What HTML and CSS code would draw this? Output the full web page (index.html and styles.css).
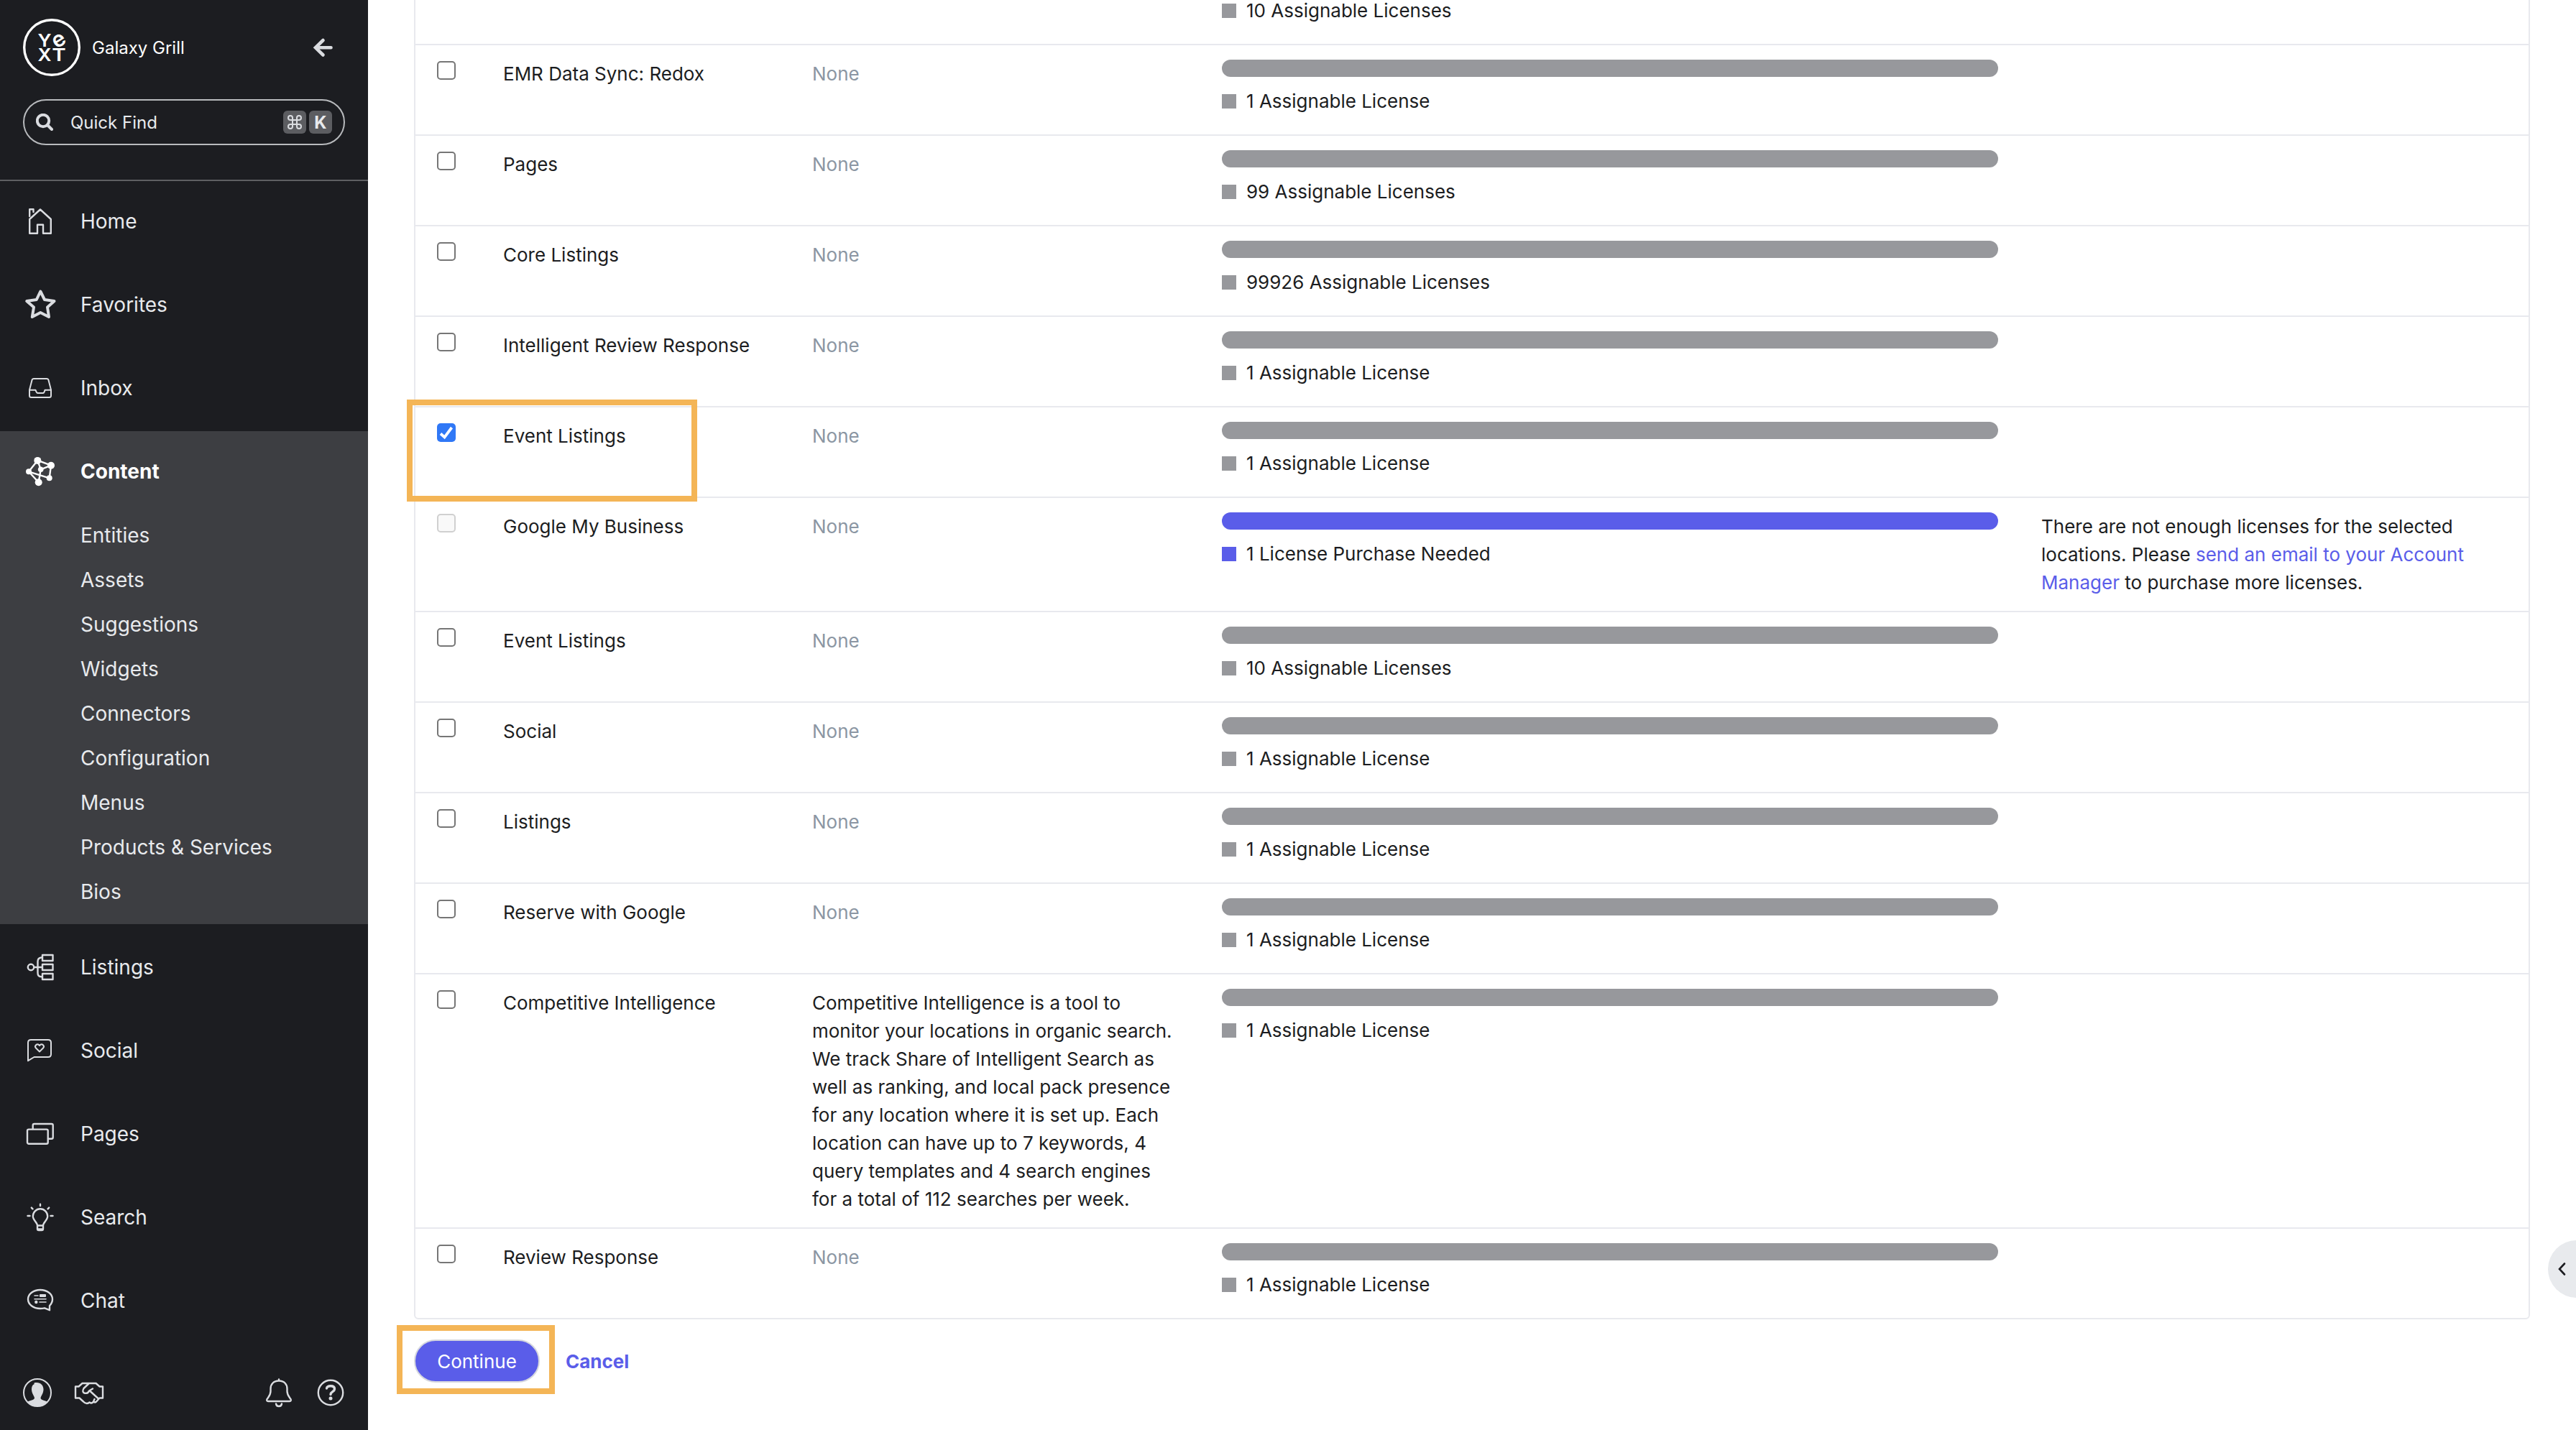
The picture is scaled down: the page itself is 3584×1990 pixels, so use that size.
FILE: index.html
```html
<!DOCTYPE html>
<html lang="en">
<head>
  <meta charset="UTF-8">
  <meta name="viewport" content="width=device-width, initial-scale=1.0">
  <title>Galaxy Grill - Add Services</title>
  <link rel="stylesheet" href="styles.css">
</head>
<body>
  <div class="app">
    <nav class="sidebar">
      <div class="account">
        <svg class="logo" viewBox="0 0 80 80">
          <circle cx="40" cy="40" r="38.3" />
          <text x="20.5" y="38.800" textLength="19" lengthAdjust="spacingAndGlyphs">Y</text>
          <text class="logo-e" x="40.700" y="38.800" textLength="18" lengthAdjust="spacingAndGlyphs" transform="rotate(-32 49.700 30)">e</text>
          <text x="20.5" y="58.800" textLength="19" lengthAdjust="spacingAndGlyphs">X</text>
          <text x="40.200" y="58.800" textLength="19.500" lengthAdjust="spacingAndGlyphs">T</text>
        </svg>
        <span class="account-name">Galaxy Grill</span>
        <svg class="collapse" viewBox="0 0 28 28"><path d="M14.500 4L4 14.300L14.500 24.500M4.500 14.300H25.500" /></svg>
      </div>

      <div class="quick-find">
        <svg class="find-icon" viewBox="0 0 24 24"><circle cx="10" cy="10" r="8.200" /><path d="M16 16L22 22" /></svg>
        <span class="find-label">Quick Find</span>
        <span class="key">
          <svg viewBox="0 0 20 20"><path d="M7 7V4A3 3 0 1 0 4 7H16A3 3 0 1 0 13 4V16A3 3 0 1 0 16 13H4A3 3 0 1 0 7 16Z" /></svg>
        </span>
        <span class="key">K</span>
      </div>

      <div class="menu">
        <a class="menu-item">
          <svg class="icon" viewBox="0 0 40 40"><path d="M5.200 36.800V17L20 3.500L34.800 17V36.800H24V24.800H16V36.800ZM5.200 13V3.200H10.500V7" /></svg>
          <span>Home</span>
        </a>
        <a class="menu-item">
          <svg class="icon star" viewBox="0 0 40 40"><path d="M20.300 1.500L26 13L39.500 15L30 23.500L32 37L20.300 31L8.800 37L11 23.500L1.200 15L14.800 13Z" /></svg>
          <span>Favorites</span>
        </a>
        <a class="menu-item">
          <svg class="icon thin" viewBox="0 0 40 40"><path d="M5 22.500L8.500 9Q9 7 11 7H29Q31 7 31.500 9L35 22.500V30.500Q35 33 32.500 33H7.500Q5 33 5 30.500ZM5 22.700H13.500Q14.800 27 16.500 27H24Q25.500 27 26.500 22.700H35" /></svg>
          <span>Inbox</span>
        </a>

        <div class="menu-group">
          <a class="menu-item active">
            <svg class="icon graph" viewBox="0 0 40 40">
              <path d="M16.300 4.700L35 11.700L32.700 29.300L4 20.300ZM16.300 4.700L20.700 17.300L35 11.700M20.700 17.300L17.700 35.300L4 20.300" />
              <circle cx="16.300" cy="4.900" r="5" />
              <circle cx="35" cy="11.700" r="5" />
              <circle cx="4" cy="20.300" r="4" />
              <circle cx="20.700" cy="17.300" r="3.800" />
              <circle cx="32.700" cy="29.300" r="4" />
              <circle cx="17.700" cy="35.200" r="5" />
            </svg>
            <span>Content</span>
          </a>
          <a class="sub-item">Entities</a>
          <a class="sub-item">Assets</a>
          <a class="sub-item">Suggestions</a>
          <a class="sub-item">Widgets</a>
          <a class="sub-item">Connectors</a>
          <a class="sub-item">Configuration</a>
          <a class="sub-item">Menus</a>
          <a class="sub-item">Products &amp; Services</a>
          <a class="sub-item">Bios</a>
        </div>

        <a class="menu-item">
          <svg class="icon" viewBox="0 0 40 40">
            <circle cx="7" cy="20" r="4.200" />
            <rect x="23" y="3" width="14.500" height="8" />
            <rect x="23" y="16" width="14.500" height="8" />
            <rect x="23" y="29" width="14.500" height="8" />
            <path d="M11.200 20H23M23 6.500H21.500Q16.500 7 16.500 12V28Q16.500 33 21.500 33.200H23" />
          </svg>
          <span>Listings</span>
        </a>
        <a class="menu-item">
          <svg class="icon thin" viewBox="0 0 40 40"><path d="M3 34.200V9Q3 5 7 5H31Q35 5 35 9V25Q35 29 31 29H11.500ZM19 21.500L14 16.500A3 3 0 0 1 18.300 12.300L19 13L19.700 12.300A3 3 0 0 1 24 16.500Z" /></svg>
          <span>Social</span>
        </a>
        <a class="menu-item">
          <svg class="icon" viewBox="0 0 40 40"><path d="M9.700 13V8Q9.700 6 11.700 6H35.700Q37.700 6 37.700 8V24.700Q37.700 26.700 35.700 26.700H31" /><rect x="2" y="13.600" width="28.700" height="20.200" rx="2" /></svg>
          <span>Pages</span>
        </a>
        <a class="menu-item">
          <svg class="icon" viewBox="0 0 40 40"><path d="M16 31.500C16 27.500 9.800 24 9.800 18.500A10.200 10.200 0 0 1 30.200 18.500C30.200 24 24 27.500 24 31.500ZM16 31.500V36Q16 38 18 38H22Q24 38 24 36V31.500M17 36.500H23M20 1.800V4M2.500 18H5.500M34.500 18H37.500M7.800 6.600L9.500 8.300M32.200 6.600L30.500 8.300" /></svg>
          <span>Search</span>
        </a>
        <a class="menu-item">
          <svg class="icon chat" viewBox="0 0 40 40">
            <path d="M33 33.200V27C35.500 24.500 37 21.500 37 18C37 10.800 29.500 5 20 5S3 10.800 3 18S10.500 31 20 31Q23 31 26 30.300Z" />
            <path class="chat-lines" d="M12 13H17M12 17.700H28M19 22H28" />
            <rect class="fill" x="19" y="11" width="9" height="4" rx="1" />
            <circle class="fill" cx="14.300" cy="22" r="2.200" />
          </svg>
          <span>Chat</span>
        </a>
      </div>

      <div class="sidebar-footer">
        <svg class="icon thin" viewBox="0 0 40 40"><circle cx="20" cy="20" r="19" /><path class="fill" d="M6.500 32.500C11 30.500 16 30 16 27.500C16 25.500 12 21 12 15.500C12 11 14 8.500 15.500 8.500V6.500C23 4.500 28.500 9 28.500 15.500C28.500 21 24.500 25.500 24.500 27.500C24.500 30 29 30.500 33.500 32.500C26 41 14 41 6.500 32.500Z" /></svg>
        <svg class="icon" viewBox="0 0 40 40"><path d="M1 11.500H5.500L10.500 7H29.500L34.500 11.500H39V27.500H34.500L30.500 32Q28.500 34.500 26 32.500Q23.500 36 20.500 33.500Q16 37 12 32.500L6.500 27.500H1ZM19.500 7.500L12.500 14Q9.500 19.500 14 20.800Q18.500 21.500 20 17.500L25 14.500M21.500 18L33 28.500M26 32.500L27.500 29" /></svg>
        <span class="spacer"></span>
        <svg class="icon" viewBox="0 0 40 40"><path d="M20 1.500V3.500M20 3.500C12.500 3.500 8.500 8.500 8.500 14.500V18C8.500 24 5 26.500 3.500 29Q2.500 32 5 32H35Q37.500 32 36.500 29C35 26.500 31.500 24 31.500 18V14.500C31.500 8.500 27.500 3.500 20 3.500ZM16 35.500Q16.500 39 20 39Q23.500 39 24 35.500" /></svg>
        <svg class="icon" viewBox="0 0 40 40"><circle cx="20" cy="20" r="17.200" /><path class="question" d="M14.500 14C15 11.500 17 10.800 20 10.800C23.500 10.800 25.500 12.300 25.500 15C25.500 18.500 20 18.800 20 22.500" /><circle class="fill" cx="20" cy="28" r="2.500" /></svg>
      </div>
    </nav>

    <main class="main">
      <div class="services">
        <div class="row">
          <div class="cell"></div>
          <div class="cell"></div>
          <div class="cell"></div>
          <div class="cell"><div class="bar"></div><div class="legend">10 Assignable Licenses</div></div>
          <div class="cell"></div>
        </div>
        <div class="row">
          <div class="cell"><span class="checkbox"></span></div>
          <div class="cell">EMR Data Sync: Redox</div>
          <div class="cell none">None</div>
          <div class="cell"><div class="bar"></div><div class="legend">1 Assignable License</div></div>
          <div class="cell"></div>
        </div>
        <div class="row">
          <div class="cell"><span class="checkbox"></span></div>
          <div class="cell">Pages</div>
          <div class="cell none">None</div>
          <div class="cell"><div class="bar"></div><div class="legend">99 Assignable Licenses</div></div>
          <div class="cell"></div>
        </div>
        <div class="row">
          <div class="cell"><span class="checkbox"></span></div>
          <div class="cell">Core Listings</div>
          <div class="cell none">None</div>
          <div class="cell"><div class="bar"></div><div class="legend">99926 Assignable Licenses</div></div>
          <div class="cell"></div>
        </div>
        <div class="row">
          <div class="cell"><span class="checkbox"></span></div>
          <div class="cell">Intelligent Review Response</div>
          <div class="cell none">None</div>
          <div class="cell"><div class="bar"></div><div class="legend">1 Assignable License</div></div>
          <div class="cell"></div>
        </div>
        <div class="row">
          <div class="highlight highlight-row"></div>
          <div class="cell"><span class="checkbox checked"><svg viewBox="0 0 26 26"><path d="M5 14.500L10.500 19.500L20.500 6" /></svg></span></div>
          <div class="cell">Event Listings</div>
          <div class="cell none">None</div>
          <div class="cell"><div class="bar"></div><div class="legend">1 Assignable License</div></div>
          <div class="cell"></div>
        </div>
        <div class="row needed">
          <div class="cell"><span class="checkbox disabled"></span></div>
          <div class="cell">Google My Business</div>
          <div class="cell none">None</div>
          <div class="cell"><div class="bar"></div><div class="legend">1 License Purchase Needed</div></div>
          <div class="cell">There are not enough licenses for the selected locations. Please <a class="link">send an email to your Account Manager</a> to purchase more licenses.</div>
        </div>
        <div class="row">
          <div class="cell"><span class="checkbox"></span></div>
          <div class="cell">Event Listings</div>
          <div class="cell none">None</div>
          <div class="cell"><div class="bar"></div><div class="legend">10 Assignable Licenses</div></div>
          <div class="cell"></div>
        </div>
        <div class="row">
          <div class="cell"><span class="checkbox"></span></div>
          <div class="cell">Social</div>
          <div class="cell none">None</div>
          <div class="cell"><div class="bar"></div><div class="legend">1 Assignable License</div></div>
          <div class="cell"></div>
        </div>
        <div class="row">
          <div class="cell"><span class="checkbox"></span></div>
          <div class="cell">Listings</div>
          <div class="cell none">None</div>
          <div class="cell"><div class="bar"></div><div class="legend">1 Assignable License</div></div>
          <div class="cell"></div>
        </div>
        <div class="row">
          <div class="cell"><span class="checkbox"></span></div>
          <div class="cell">Reserve with Google</div>
          <div class="cell none">None</div>
          <div class="cell"><div class="bar"></div><div class="legend">1 Assignable License</div></div>
          <div class="cell"></div>
        </div>
        <div class="row">
          <div class="cell"><span class="checkbox"></span></div>
          <div class="cell">Competitive Intelligence</div>
          <div class="cell">Competitive Intelligence is a tool to monitor your locations in organic search. We track Share of Intelligent Search as well as ranking, and local pack presence for any location where it is set up. Each location can have up to 7 keywords, 4 query templates and 4 search engines for a total of 112 searches per week.</div>
          <div class="cell"><div class="bar"></div><div class="legend">1 Assignable License</div></div>
          <div class="cell"></div>
        </div>
        <div class="row">
          <div class="cell"><span class="checkbox"></span></div>
          <div class="cell">Review Response</div>
          <div class="cell none">None</div>
          <div class="cell"><div class="bar"></div><div class="legend">1 Assignable License</div></div>
          <div class="cell"></div>
        </div>
      </div>

      <div class="actions">
        <div class="highlight highlight-button"></div>
        <button class="btn-continue">Continue</button>
        <a class="btn-cancel">Cancel</a>
      </div>
    </main>

    <div class="drawer-toggle">
      <svg viewBox="0 0 12 20"><path d="M9 2.500L2 10L9 17.500" /></svg>
    </div>
  </div>
</body>
</html>
```

FILE: styles.css
```css
* {
  box-sizing: border-box;
}

body {
  margin: 0;
  font-family: Inter, sans-serif;
  font-size: 26px;
  line-height: 39px;
  color: #1c1d21;
  background: #fff;
}

.app {
  position: relative;
  display: flex;
  height: 1990px;
  overflow: hidden;
}

/* Sidebar */
.sidebar {
  display: flex;
  flex-direction: column;
  flex-shrink: 0;
  width: 512px;
  background: #1c1d21;
  color: #e8eaed;
}

.sidebar svg {
  flex-shrink: 0;
  fill: none;
  stroke: #dadce0;
}

.account {
  display: flex;
  align-items: center;
  height: 80px;
  margin: 26px 49px 32px 32px;
}

.sidebar .logo {
  width: 80px;
  height: 80px;
  stroke: #fff;
  stroke-width: 3.4;
}

.logo text {
  fill: #fff;
  stroke: none;
  font-size: 24px;
  font-weight: 600;
}

.logo .logo-e {
  font-size: 30px;
}

.account-name {
  flex: 1;
  margin-left: 16px;
  font-size: 24px;
  color: #fff;
}

.collapse {
  width: 28px;
  height: 28px;
  stroke-width: 4.6;
  stroke-linecap: round;
}

.quick-find {
  display: flex;
  align-items: center;
  height: 64px;
  margin: 0 32px 48px;
  padding: 0 16px;
  border: 2px solid #b8babd;
  border-radius: 32px;
  font-size: 24px;
}

.find-icon {
  width: 24px;
  height: 24px;
  stroke-width: 4;
  stroke-linecap: round;
}

.find-label {
  flex: 1;
  margin-left: 24px;
}

.key {
  display: flex;
  align-items: center;
  justify-content: center;
  width: 32px;
  height: 32px;
  margin-left: 4px;
  border-radius: 6px;
  background: #5c5d61;
  font-weight: 700;
}

.key svg {
  width: 20px;
  height: 20px;
  stroke-width: 2;
}

.menu {
  flex: 1;
  border-top: 2px solid #5f6063;
}

.menu-item {
  display: flex;
  align-items: center;
  height: 116px;
  padding: 0 36px 4px;
  font-size: 28px;
}

.icon {
  width: 40px;
  height: 40px;
  overflow: visible;
  stroke-width: 2.4;
  stroke-linecap: round;
  stroke-linejoin: round;
}

.icon.thin {
  stroke-width: 2;
}

.icon.star {
  stroke-width: 4;
}

.icon .fill {
  fill: #dadce0;
  stroke: none;
}

.icon .question {
  stroke-width: 3.4;
}

.icon.chat .chat-lines {
  stroke-width: 1.6;
}

.menu-item span {
  margin-left: 36px;
}

.menu-group {
  margin-bottom: 4px;
  padding-bottom: 14px;
  background: #3d3e42;
}

.menu-item.active {
  height: 114px;
  padding-bottom: 2px;
  color: #fff;
  font-weight: 700;
}

.sidebar .graph {
  fill: #fff;
  stroke: none;
}

.graph path {
  fill: none;
  stroke: #fff;
}

.sub-item {
  display: block;
  height: 62px;
  padding-left: 112px;
  font-size: 28px;
  line-height: 62px;
}

.sidebar-footer {
  display: flex;
  gap: 32px;
  padding: 0 32px 32px;
}

.spacer {
  flex: 1;
}

/* Services table, scrolled so its first row is cut by the top edge */
.main {
  flex: 1;
  padding: 0 64px;
}

.services {
  margin-top: -65px;
  border: 2px solid #e8e9ee;
  border-radius: 6px;
}

.row {
  position: relative;
  display: grid;
  grid-template-columns: 92px 430px 570px 1140px 1fr;
  min-height: 126px;
  border-bottom: 2px solid #e8e9ee;
}

.row:last-child {
  min-height: 124px;
  border-bottom: none;
}

.cell {
  padding: 20px 30px;
}

.none {
  color: #8b96a3;
}

.checkbox {
  display: block;
  width: 26px;
  height: 26px;
  margin-top: 2px;
  border: 2px solid #767676;
  border-radius: 5px;
}

.checkbox.checked {
  border: none;
  background: #3078f6;
}

.checkbox svg {
  display: block;
  fill: none;
  stroke: #fff;
  stroke-width: 3.8;
}

.checkbox.disabled {
  border-color: #d0d0d0;
  background: #f9f9f9;
}

.bar {
  height: 24px;
  margin-bottom: 14px;
  border-radius: 12px;
  background: #97989c;
}

.legend {
  display: flex;
  align-items: center;
  line-height: 40px;
}

.legend::before {
  content: "";
  width: 20px;
  height: 20px;
  margin-right: 14px;
  background: #97989c;
}

.needed .bar,
.needed .legend::before {
  background: #5a5de9;
}

.link {
  color: #5a5de9;
}

.highlight {
  position: absolute;
  border: 8px solid #f4b556;
}

.highlight-row {
  top: -11px;
  left: -12px;
  width: 404px;
  height: 142px;
}

.highlight-button {
  top: -20px;
  left: -24px;
  width: 220px;
  height: 96px;
}

.actions {
  position: relative;
  display: flex;
  align-items: center;
  gap: 36px;
  margin-top: 28px;
}

.btn-continue {
  width: 175px;
  height: 60px;
  padding: 0;
  border: 2px solid #d5d7de;
  border-radius: 30px;
  background: #5a5de9;
  color: #fff;
  font: 26px Inter, sans-serif;
}

.btn-cancel {
  color: #5a5de9;
  font-weight: 700;
}

.drawer-toggle {
  position: absolute;
  top: 1726px;
  left: 3545px;
  display: flex;
  align-items: center;
  width: 80px;
  height: 80px;
  padding-left: 14px;
  border-radius: 50%;
  background: #e8eaed;
}

.drawer-toggle svg {
  width: 12px;
  height: 20px;
  fill: none;
  stroke: #1c1d21;
  stroke-width: 2.6;
  stroke-linecap: round;
}
```
